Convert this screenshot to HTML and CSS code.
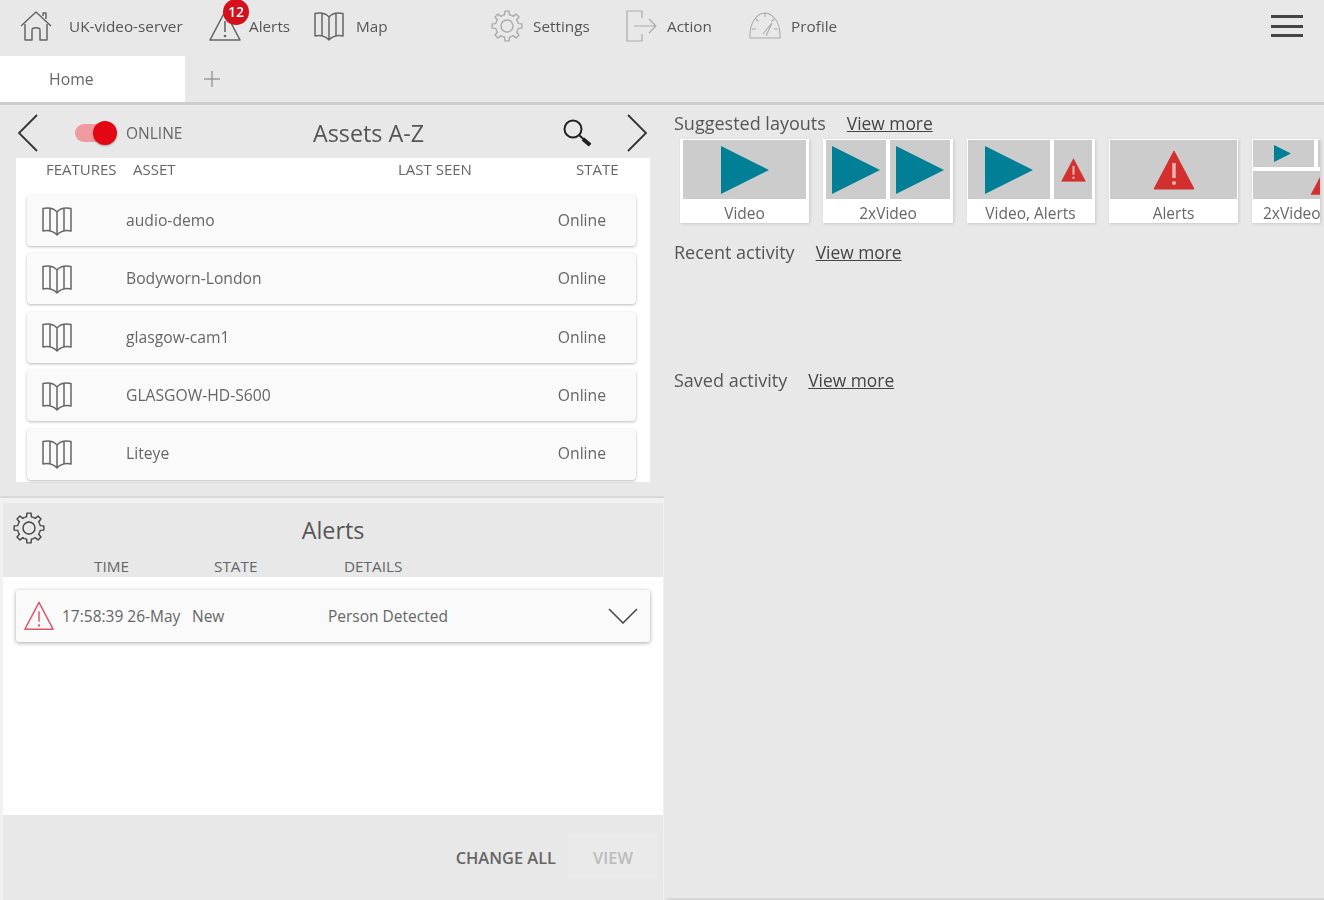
FILE: index.html
```html
<!DOCTYPE html>
<html lang="en">
<head>
<meta charset="utf-8">
<title>UK-video-server</title>
<link rel="stylesheet" href="styles.css">
</head>
<body>
<svg class="defs" width="0" height="0" aria-hidden="true">
  <symbol id="map" viewBox="0 0 32 32"><path d="M16 7C13 3.500 7 2.500 2 3.500V26C7 25 12 26 16 30C20 26 25 25 30 26V3.500C25 2.500 19 3.500 16 7ZM16 7V30M9 3.200V26M23 3.200V26" fill="none" stroke="currentColor" stroke-width="1.500" stroke-linejoin="round"/></symbol>
  <symbol id="gear" viewBox="0 0 32 32">
    <g fill="none" stroke="currentColor" stroke-width="1.400" stroke-linejoin="round">
      <path id="tooth" d="M11.600 5.380L13.610 4.750L13.910 1.150H18.090L18.390 4.750L20.400 5.380"/>
      <use href="#tooth" transform="rotate(45 16 16)"/><use href="#tooth" transform="rotate(90 16 16)"/><use href="#tooth" transform="rotate(135 16 16)"/><use href="#tooth" transform="rotate(180 16 16)"/><use href="#tooth" transform="rotate(225 16 16)"/><use href="#tooth" transform="rotate(270 16 16)"/><use href="#tooth" transform="rotate(315 16 16)"/>
      <circle cx="16" cy="16" r="6"/>
    </g>
  </symbol>
  <symbol id="warn" viewBox="0 0 32 32"><path d="M16 1.500L31 30H1Z" fill="none" stroke="currentColor" stroke-width="1.600" stroke-linejoin="round"/><path d="M16 11V22" stroke="currentColor" stroke-width="1.600"/><circle cx="16" cy="26" r="1.300" fill="currentColor"/></symbol>
  <symbol id="play" viewBox="0 0 48 48"><path d="M0 0L48 24L0 48Z" fill="currentColor"/></symbol>
  <symbol id="danger" viewBox="0 0 42 40"><path d="M21 1L41 39H1Z" fill="#d32f2f" stroke="#d32f2f" stroke-linejoin="round"/><path d="M21 13V28" stroke="#e8b4b4" stroke-width="3.500"/><circle cx="21" cy="33" r="2" fill="#e8b4b4"/></symbol>
</svg>

<header class="topbar">
  <nav class="nav">
    <a class="nav-item home">
      <svg class="ico" viewBox="0 0 32 32"><path d="M1 16L16 2L31 16M5 14V30H12V20C12 17 20 17 20 20V30H27V14M23 6V3H26V9" fill="none" stroke="currentColor" stroke-width="1.500" stroke-linejoin="round"/></svg>
      <span>UK-video-server</span>
    </a>
    <a class="nav-item alerts">
      <span class="ico-wrap"><svg class="ico"><use href="#warn"/></svg><b class="badge">12</b></span>
      <span>Alerts</span>
    </a>
    <a class="nav-item map"><svg class="ico"><use href="#map"/></svg><span>Map</span></a>
    <a class="nav-item settings faded"><svg class="ico"><use href="#gear"/></svg><span>Settings</span></a>
    <a class="nav-item action faded">
      <svg class="ico" viewBox="0 0 32 32"><path d="M16 8V1H1V31H16V24M8 16H30M23 9L30 16L23 23" fill="none" stroke="currentColor" stroke-width="1.200"/></svg>
      <span>Action</span>
    </a>
    <a class="nav-item profile faded">
      <svg class="ico" viewBox="0 0 32 32"><path d="M1 28C0 8 12 3 16 3C20 3 32 8 31 28ZM16 3V7M7 9L9.500 11.500M25 9L22.500 11.500M3 19H7M25 19H29M14 24L23 13L17 26" fill="none" stroke="currentColor" stroke-width="1.100"/></svg>
      <span>Profile</span>
    </a>
  </nav>
  <button class="burger" aria-label="Menu"><i></i><i></i><i></i></button>
</header>

<div class="tabs">
  <div class="tab">Home</div>
  <div class="tab-add">
    <svg viewBox="0 0 18 18"><path d="M9 1V17M1 9H17" stroke="currentColor" stroke-width="1.400"/></svg>
  </div>
</div>

<main class="main">
  <section class="left">
    <div class="panel assets">
      <div class="assets-head">
        <svg class="chev" viewBox="0 0 24 40"><path d="M21 2L3 20L21 38" fill="none" stroke="currentColor" stroke-width="1.800"/></svg>
        <div class="toggle"><span class="track"></span><span class="thumb"></span></div>
        <span class="toggle-label">ONLINE</span>
        <h2 class="title assets-title">Assets A-Z</h2>
        <svg class="search" viewBox="0 0 30 30"><circle cx="11" cy="11" r="8.500" fill="none" stroke="currentColor" stroke-width="2"/><path d="M17 17L28 27" stroke="currentColor" stroke-width="2"/><path d="M21 21L28 27" stroke="currentColor" stroke-width="4"/></svg>
        <svg class="chev" viewBox="0 0 24 40"><path d="M3 2L21 20L3 38" fill="none" stroke="currentColor" stroke-width="1.800"/></svg>
      </div>
      <div class="table">
        <div class="thead">
          <span class="th-features">FEATURES</span><span class="th-asset">ASSET</span><span class="th-seen">LAST SEEN</span><span class="th-state">STATE</span>
        </div>
        <div class="rows">
          <div class="row"><svg class="ico row-ico"><use href="#map"/></svg><span class="row-name">audio-demo</span><span class="row-state">Online</span></div>
          <div class="row"><svg class="ico row-ico"><use href="#map"/></svg><span class="row-name">Bodyworn-London</span><span class="row-state">Online</span></div>
          <div class="row"><svg class="ico row-ico"><use href="#map"/></svg><span class="row-name">glasgow-cam1</span><span class="row-state">Online</span></div>
          <div class="row"><svg class="ico row-ico"><use href="#map"/></svg><span class="row-name">GLASGOW-HD-S600</span><span class="row-state">Online</span></div>
          <div class="row"><svg class="ico row-ico"><use href="#map"/></svg><span class="row-name">Liteye</span><span class="row-state">Online</span></div>
        </div>
      </div>
    </div>

    <div class="panel alerts-panel">
      <div class="alerts-head">
        <svg class="ico alerts-gear"><use href="#gear"/></svg>
        <h2 class="title">Alerts</h2>
      </div>
      <div class="alerts-cols"><span class="c-time">TIME</span><span class="c-state">STATE</span><span class="c-details">DETAILS</span></div>
      <div class="alerts-body">
        <div class="alert-row">
          <svg class="ico alert-ico"><use href="#warn"/></svg>
          <span class="a-time">17:58:39 26-May</span>
          <span class="a-state">New</span>
          <span class="a-details">Person Detected</span>
          <svg class="a-chev" viewBox="0 0 30 16"><path d="M1 1L15 15L29 1" fill="none" stroke="currentColor" stroke-width="1.500"/></svg>
        </div>
      </div>
      <div class="alerts-foot">
        <span class="change">CHANGE ALL</span>
        <span class="view">VIEW</span>
      </div>
    </div>
  </section>

  <section class="right">
    <div class="sec-head first"><span>Suggested layouts</span><a>View more</a></div>
    <div class="cards">
      <div class="card c1">
        <div class="thumbs"><div class="thumb-box"><svg class="play big"><use href="#play"/></svg></div></div>
        <div class="label">Video</div>
      </div>
      <div class="card c2">
        <div class="thumbs"><div class="thumb-box"><svg class="play big"><use href="#play"/></svg></div><div class="thumb-box"><svg class="play big"><use href="#play"/></svg></div></div>
        <div class="label">2xVideo</div>
      </div>
      <div class="card c3">
        <div class="thumbs"><div class="thumb-box wide"><svg class="play big"><use href="#play"/></svg></div><div class="thumb-box narrow"><svg class="danger small"><use href="#danger"/></svg></div></div>
        <div class="label">Video, Alerts</div>
      </div>
      <div class="card c4">
        <div class="thumbs"><div class="thumb-box"><svg class="danger large"><use href="#danger"/></svg></div></div>
        <div class="label">Alerts</div>
      </div>
      <div class="card c5">
        <div class="thumbs stack">
          <div class="stack-top"><div class="thumb-box"><svg class="play tiny"><use href="#play"/></svg></div><div class="thumb-box"></div></div>
          <div class="thumb-box end"><svg class="danger mini"><use href="#danger"/></svg></div>
        </div>
        <div class="label">2xVideo</div>
      </div>
    </div>
    <div class="sec-head recent"><span>Recent activity</span><a>View more</a></div>
    <div class="sec-head saved"><span>Saved activity</span><a>View more</a></div>
  </section>
</main>
</body>
</html>
```
FILE: styles.css
```css
* { box-sizing: border-box; }
html, body { margin: 0; height: 100%; }
body {
  width: 1324px;
  height: 900px;
  overflow: hidden;
  background: #e8e8e8;
  color: #555;
  font-family: "Open Sans", "Noto Sans", sans-serif;
  font-size: 14px;
  filter: blur(0.6px);
}
.defs { position: absolute; }
.ico { width: 32px; height: 32px; display: block; flex: none; }

.topbar { height: 56px; display: flex; align-items: center; justify-content: space-between; padding: 0 21px 4px 20px; }
.nav { display: flex; align-items: center; }
.nav-item { display: flex; align-items: center; color: #555; font-size: 15.300px; white-space: nowrap; }
.nav-item .ico { color: #666; }
.home { gap: 17px; width: 189px; }
.alerts { gap: 8px; width: 104px; }
.map { gap: 11px; width: 178px; }
.settings { gap: 10px; width: 135px; }
.action { gap: 9px; width: 123px; }
.profile { gap: 10px; }
.faded .ico { color: #aaa; }
.ico-wrap { position: relative; display: block; }
.badge {
  position: absolute; left: 14px; top: -11px; width: 26px; height: 26px; border-radius: 50%;
  background: #d50f1b; color: #fff; font-size: 14px; font-weight: 600; text-align: center; line-height: 26px;
}
.burger { width: 32px; height: 22px; padding: 0; border: 0; background: none; display: flex; flex-direction: column; justify-content: space-between; }
.burger i { display: block; height: 3px; background: #444; }

.tabs { height: 49px; display: flex; border-bottom: 3px solid #cdcdcd; }
.tab { width: 185px; background: #fff; padding: 12px 0 0 49px; color: #666; font-size: 15.800px; }
.tab-add { margin: 14px 0 0 18px; width: 18px; height: 18px; color: #999; }

.main { display: flex; height: 795px; }
.left { width: 664px; flex: none; display: flex; flex-direction: column; background: #f1f1f1; }
.right { flex: 1; margin-left: 3px; padding: 6px 4px 0 7px; overflow: hidden; min-width: 0; border-bottom: 2px solid #d8d8d8; }

.panel { background: #e8e8e8; }
.assets { height: 393px; border-bottom: 2px solid #d9d9d9; padding: 0 13px 0 16px; }
.assets-head { height: 53px; display: flex; align-items: center; padding-top: 2px; }
.chev { width: 24px; height: 40px; color: #333; flex: none; }
.assets-head .chev:first-child { margin-right: 35px; }
.toggle { position: relative; width: 42px; height: 26px; flex: none; }
.track { position: absolute; left: 0; top: 4px; width: 40px; height: 18px; border-radius: 9px; background: #ee9a9e; }
.thumb { position: absolute; right: 0; top: 1px; width: 24px; height: 24px; border-radius: 50%; background: #e30613; box-shadow: 0 1px 2px rgba(0,0,0,.3); }
.toggle-label { margin-left: 9px; width: 187px; color: #666; font-size: 15.500px; }
.title { margin: 0; font-weight: 400; font-size: 23.300px; color: #555; }
.assets-title { width: 249px; }
.search { width: 30px; height: 30px; color: #222; flex: none; margin-right: 33px; }

.table { background: #fff; margin-right: 1px; height: 324px; }
.thead { height: 37px; display: flex; align-items: center; color: #666; font-size: 15px; padding-bottom: 16px; }
.thead span { display: block; }
.th-features { margin-left: 30px; width: 87px; }
.th-asset { width: 265px; }
.th-seen { width: 178px; }
.rows { display: flex; flex-direction: column; gap: 7.400px; padding: 0 14px 0 11px; }
.row {
  height: 51px; display: flex; align-items: center; background: #fafafa; border-radius: 4px;
  box-shadow: 0 1px 3px rgba(0,0,0,.28); padding: 0 30px 1.500px 14px; color: #666; font-size: 15.700px;
}
.row-ico { color: #666; margin-top: 1.500px; }
.row-name { margin-left: 53px; flex: 1; }

.alerts-panel { flex: 1; margin: 5px 1px 0 3px; display: flex; flex-direction: column; position: relative; }
.alerts-head { height: 53px; display: flex; align-items: center; justify-content: center; position: relative; }
.alerts-gear { position: absolute; left: 10px; top: 9px; color: #444; }
.alerts-cols { height: 21px; display: flex; color: #666; font-size: 15.300px; line-height: 21px; }
.c-time { margin-left: 91px; width: 120px; }
.c-state { width: 130px; }
.alerts-body { height: 238px; background: #fff; padding: 13px 13px 0; }
.alert-row {
  height: 52px; display: flex; align-items: center; background: #fafafa; border-radius: 3px;
  box-shadow: 0 1px 4px rgba(0,0,0,.35); padding: 0 12px 0 8px; color: #666; font-size: 15.500px;
}
.alert-ico { width: 30px; height: 30px; color: #d9596b; }
.a-time { margin-left: 8px; width: 130px; white-space: nowrap; }
.a-state { width: 136px; }
.a-details { flex: 1; }
.a-chev { width: 30px; height: 16px; color: #444; flex: none; }
.alerts-foot { flex: 1; display: flex; align-items: center; padding: 0 5px 0 0; justify-content: flex-end; font-size: 16.400px; font-weight: 600; color: #666; }
.view { width: 90px; height: 46px; margin: 0 0 3px 12px; line-height: 49px; text-align: center; color: #bbb; background: #eaeaea; }

.sec-head { display: flex; gap: 21px; font-size: 18px; color: #555; line-height: 24px; }
.sec-head a { text-decoration: underline; color: #444; font-size: 17.400px; }
.cards { display: flex; gap: 14px; margin: 4px 0 0 6px; width: 660px; }
.card { width: 130px; height: 84px; flex: none; background: #fff; box-shadow: 1px 1px 3px rgba(0,0,0,.14); display: flex; flex-direction: column; padding: 1px 3px 0; }
.c1 { width: 129px; }
.c3 { width: 128px; padding: 1px 2px 0 1px; }
.c4 { width: 129px; padding: 1px 1px 0; }
.c5 { width: 68px; padding: 1px 0 0 1px; overflow: hidden; }
.thumbs { height: 59px; display: flex; gap: 4px; flex: none; }
.thumb-box { flex: 1; background: #cccccc; display: flex; align-items: center; justify-content: center; min-width: 0; }
.wide { flex: none; width: 82px; }
.narrow { flex: none; width: 38px; }
.label { flex: 1; text-align: center; color: #666; font-size: 15.500px; line-height: 29px; white-space: nowrap; overflow: hidden; }
.c5 .label { text-align: left; padding-left: 10px; }
.play { color: #007f96; }
.big { width: 48px; height: 48px; }
.tiny { width: 17px; height: 17px; margin-right: 3px; }
.small { width: 25px; height: 24px; }
.large { width: 42px; height: 40px; }
.mini { width: 24px; height: 20px; flex: none; }
.stack { flex-direction: column; }
.stack-top { display: flex; gap: 4px; height: 27px; flex: none; }
.stack-top .thumb-box:first-child { flex: none; width: 61px; }
.end { justify-content: flex-start; padding-left: 56px; }
.recent { margin-top: 17px; }
.saved { margin-top: 104px; }
.first { margin-top: 0; }
```
